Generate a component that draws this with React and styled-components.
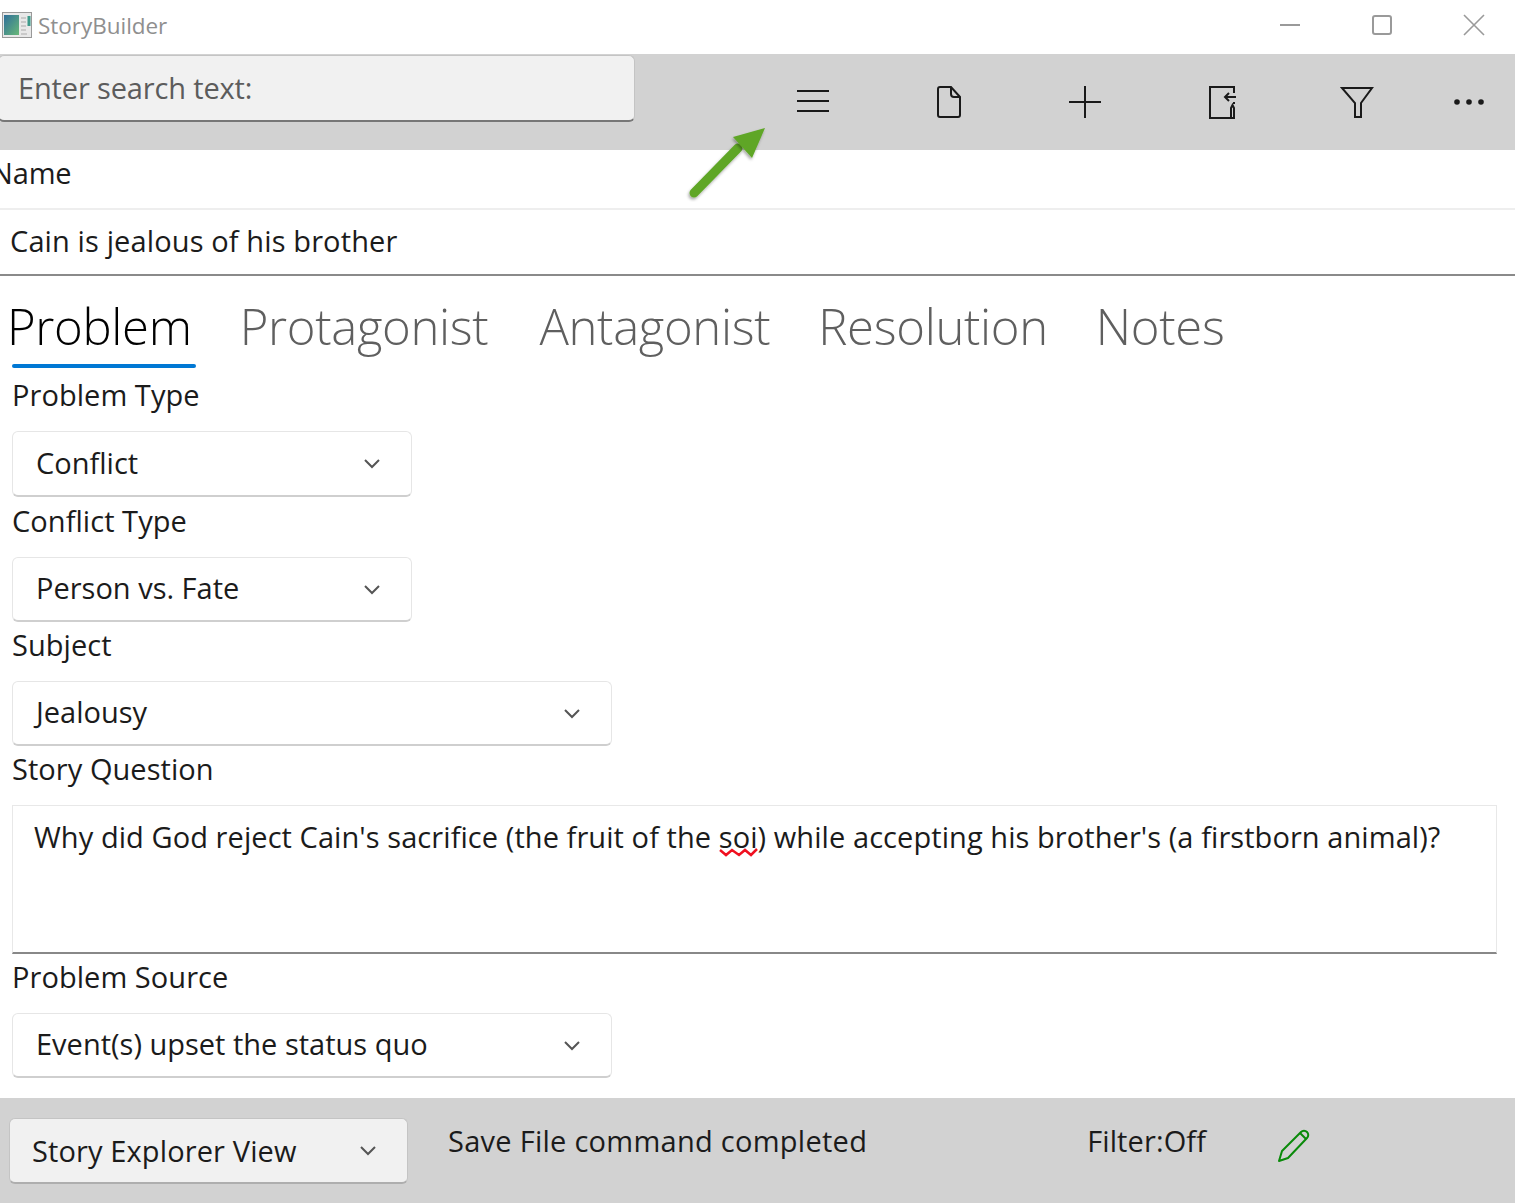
import React from "react";
import styled, { createGlobalStyle } from "styled-components";

const GlobalStyle = createGlobalStyle`
  html, body {
    margin: 0;
    padding: 0;
    background: #fff;
    overflow: hidden;
  }
  body {
    font-family: "Open Sans", "Noto Sans", sans-serif;
    color: #1b1b1b;
  }
`;

const Window = styled.div`
  position: relative;
  width: 1515px;
  height: 1203px;
  display: flex;
  flex-direction: column;
  overflow: hidden;
`;

const TitleBar = styled.div`
  height: 54px;
  box-sizing: border-box;
  padding: 0 0 4px 2px;
  display: flex;
  align-items: center;
  flex-shrink: 0;
`;

const AppTitle = styled.span`
  margin-left: 6px;
  font-size: 22.5px;
  letter-spacing: -0.03px;
  color: #8f8f8f;
`;

const WindowButtons = styled.div`
  margin-left: auto;
  display: flex;
  align-items: center;
  gap: 70px;
  padding-right: 30px;
  color: #9a9a9a;
`;

const Toolbar = styled.div`
  height: 96px;
  background: #d2d2d2;
  display: flex;
  align-items: flex-start;
  flex-shrink: 0;
`;

const SearchBox = styled.div`
  width: 637px;
  height: 67px;
  margin: 1px 0 0 -2px;
  box-sizing: border-box;
  padding: 0 0 2px 19px;
  display: flex;
  align-items: center;
  background: #f1f1f1;
  border: 1px solid #c4c4c4;
  border-bottom: 2px solid #777;
  border-radius: 6px;
  font-size: 29px;
  letter-spacing: -0.15px;
  color: #5c5c5c;
`;

const ToolIcons = styled.div`
  margin-left: 160px;
  padding-top: 26px;
  display: flex;
  align-items: center;
  gap: 100px;
  color: #1a1a1a;
`;

const ToolIcon = styled.svg`
  width: 36px;
  height: 42px;
  display: block;
  margin-left: ${(p) => p.$shift || 0}px;
`;

const NameRow = styled.div`
  height: 58px;
  box-sizing: border-box;
  padding: 2px 0 0 0;
  margin-left: -9px;
  font-size: 29px;
  letter-spacing: -0.15px;
  line-height: 42px;
  flex-shrink: 0;
`;

const NameInput = styled.div`
  height: 68px;
  box-sizing: border-box;
  padding: 10px 0 0 10px;
  border-top: 2px solid #eeeeee;
  border-bottom: 2px solid #8a8a8a;
  font-size: 29px;
  letter-spacing: 0.12px;
  line-height: 42px;
  flex-shrink: 0;
`;

const Tabs = styled.div`
  height: 92px;
  box-sizing: border-box;
  display: flex;
  gap: 48px;
  padding-left: 7px;
  flex-shrink: 0;
`;

const Tab = styled.div`
  position: relative;
  height: 92px;
  margin-left: ${(p) => p.$shift || 0}px;
  font-size: 49px;
  font-weight: 300;
  letter-spacing: -0.32px;
  line-height: 100px;
  color: ${(p) => (p.$active ? "#000" : "#5f5f5f")};
`;

const TabMark = styled.div`
  position: absolute;
  left: 5px;
  right: -4px;
  bottom: 0;
  height: 4px;
  border-radius: 2px;
  background: #0078d4;
`;

const Form = styled.div`
  padding-left: 12px;
  display: flex;
  flex-direction: column;
`;

const FieldLabel = styled.div`
  height: ${(p) => p.$h}px;
  box-sizing: border-box;
  padding-top: ${(p) => p.$top}px;
  font-size: 29px;
  letter-spacing: 0.05px;
  line-height: 44px;
`;

const Select = styled.div`
  width: ${(p) => p.$w}px;
  height: ${(p) => p.$h}px;
  box-sizing: border-box;
  padding: 0 30px ${(p) => (p.$filled ? 0 : 3)}px ${(p) => (p.$filled ? 22 : 23)}px;
  display: flex;
  align-items: center;
  justify-content: space-between;
  background: ${(p) => (p.$filled ? "#f1f1f1" : "#fff")};
  border: 1px solid ${(p) => (p.$filled ? "#c4c4c4" : "#e6e6e6")};
  border-bottom: 2px solid ${(p) => (p.$filled ? "#aeaeae" : "#cfcfcf")};
  border-radius: 6px;
  font-size: 29px;
  letter-spacing: ${(p) => (p.$filled ? 0.12 : 0)}px;

  svg {
    margin-top: ${(p) => (p.$filled ? 0 : 4)}px;
  }
`;

const Question = styled.div`
  width: 1485px;
  height: 149px;
  box-sizing: border-box;
  padding: 9px 0 0 21px;
  border: 1px solid #e8e8e8;
  border-bottom: 2px solid #888;
  font-size: 29px;
  letter-spacing: 0.07px;
  line-height: 44px;
  white-space: nowrap;
`;

const Misspelled = styled.span`
  position: relative;
`;

const SquiggleMark = styled.svg`
  position: absolute;
  left: 0;
  bottom: -2px;
  width: 40px;
  height: 11px;
`;

const StatusBar = styled.div`
  margin-top: auto;
  height: 105px;
  background: #d2d2d2;
  display: flex;
  align-items: flex-start;
  padding: 20px 0 0 9px;
  box-sizing: border-box;
  flex-shrink: 0;
`;

const StatusText = styled.div`
  margin: 1px 0 0 ${(p) => p.$gap}px;
  font-size: 29px;
  letter-spacing: ${(p) => p.$spacing}px;
  line-height: 44px;
`;

const PencilSlot = styled.div`
  margin: 11px 0 0 71px;
`;

const ArrowOverlay = styled.svg`
  position: absolute;
  left: 680px;
  top: 120px;
  width: 95px;
  height: 85px;
  pointer-events: none;
`;

function Chevron() {
  return (
    <svg width="18" height="12" viewBox="0 0 18 12" fill="none" stroke="#555" strokeWidth="2">
      <path d="M2 2l7 7 7-7" />
    </svg>
  );
}

export default function App() {
  return (
    <Window>
      <GlobalStyle />
      <TitleBar>
        <svg width="30" height="26" viewBox="0 0 30 26">
          <rect x="0.5" y="0.5" width="29" height="25" fill="#e8e8e8" stroke="#999" />
          <defs>
            <linearGradient id="pane" x1="0" y1="0" x2="1" y2="1">
              <stop offset="0" stopColor="#2f6f9a" />
              <stop offset="1" stopColor="#68b878" />
            </linearGradient>
          </defs>
          <rect x="2" y="3" width="15" height="20" fill="url(#pane)" />
          <path d="M19 6h5M19 10h5M19 14h5M19 18h5M19 22h6" stroke="#aaa" strokeWidth="1.2" />
          <rect x="25.5" y="4" width="3" height="10" fill="#3d9a8a" />
        </svg>
        <AppTitle>StoryBuilder</AppTitle>
        <WindowButtons>
          <svg width="22" height="22" viewBox="0 0 22 22" stroke="currentColor" strokeWidth="2" fill="none">
            <path d="M1 11h20" />
          </svg>
          <svg width="22" height="22" viewBox="0 0 22 22" stroke="currentColor" strokeWidth="2" fill="none">
            <rect x="2" y="2" width="18" height="18" rx="2" />
          </svg>
          <svg width="22" height="22" viewBox="0 0 22 22" stroke="currentColor" strokeWidth="1.6" fill="none">
            <path d="M1 1l20 20M21 1L1 21" />
          </svg>
        </WindowButtons>
      </TitleBar>

      <Toolbar>
        <SearchBox>Enter search text:</SearchBox>
        <ToolIcons>
          <ToolIcon viewBox="0 0 36 42" fill="none" stroke="currentColor" strokeWidth="2">
            <path d="M2 11h32M2 21h32M2 31h32" />
          </ToolIcon>
          <ToolIcon viewBox="0 0 36 42" fill="none" stroke="currentColor" strokeWidth="2">
            <path d="M9 7h11l9 10v18a2 2 0 0 1-2 2H9a2 2 0 0 1-2-2V9a2 2 0 0 1 2-2zM20 7v7a3 3 0 0 0 3 3h6" />
          </ToolIcon>
          <ToolIcon viewBox="0 0 36 42" fill="none" stroke="currentColor" strokeWidth="2">
            <path d="M18 6v32M2 22h32" />
          </ToolIcon>
          <ToolIcon viewBox="0 0 36 42" fill="none" stroke="currentColor" strokeWidth="2">
            <path d="M31 13V7H7v31h24M31 24v-2" />
            <path d="M33 17H23M26 13l-4 4 4 4" />
            <path d="M28 38V28l1.500-3 1.500 3v10z" />
          </ToolIcon>
          <ToolIcon viewBox="0 0 36 42" fill="none" stroke="currentColor" strokeWidth="2">
            <path d="M3 8h30L22 23v14h-6V23z" />
          </ToolIcon>
          <ToolIcon $shift={-24} viewBox="0 0 36 42" fill="currentColor">
            <circle cx="6" cy="22" r="2.800" />
            <circle cx="18" cy="22" r="2.800" />
            <circle cx="30" cy="22" r="2.800" />
          </ToolIcon>
        </ToolIcons>
      </Toolbar>

      <NameRow>Name</NameRow>
      <NameInput>Cain is jealous of his brother</NameInput>

      <Tabs>
        <Tab $active>
          Problem
          <TabMark />
        </Tab>
        <Tab>Protagonist</Tab>
        <Tab $shift={3}>Antagonist</Tab>
        <Tab>Resolution</Tab>
        <Tab>Notes</Tab>
      </Tabs>

      <Form>
        <FieldLabel $h={63} $top={5}>Problem Type</FieldLabel>
        <Select $w={400} $h={66}>
          Conflict
          <Chevron />
        </Select>
        <FieldLabel $h={60} $top={2}>Conflict Type</FieldLabel>
        <Select $w={400} $h={65}>
          Person vs. Fate
          <Chevron />
        </Select>
        <FieldLabel $h={59} $top={1}>Subject</FieldLabel>
        <Select $w={600} $h={65}>
          Jealousy
          <Chevron />
        </Select>
        <FieldLabel $h={59} $top={1}>Story Question</FieldLabel>
        <Question>
          Why did God reject Cain's sacrifice (the fruit of the{" "}
          <Misspelled>
            soi
            <SquiggleMark viewBox="0 0 40 11" fill="none" stroke="#f01020" strokeWidth="2.500">
              <path d="M1 3l6 5 6-5 7 5 6-5 6 5 6-6" />
            </SquiggleMark>
          </Misspelled>
          ) while accepting his brother's (a firstborn animal)?
        </Question>
        <FieldLabel $h={59} $top={1}>Problem Source</FieldLabel>
        <Select $w={600} $h={65}>
          Event(s) upset the status quo
          <Chevron />
        </Select>
      </Form>

      <StatusBar>
        <Select $w={399} $h={66} $filled>
          Story Explorer View
          <Chevron />
        </Select>
        <StatusText $gap={40} $spacing={0.27}>Save File command completed</StatusText>
        <StatusText $gap={220} $spacing={0.12}>Filter:Off</StatusText>
        <PencilSlot>
          <svg width="34" height="34" viewBox="0 0 34 34" fill="none" stroke="#0a8a0a" strokeWidth="2" strokeLinejoin="round">
            <path d="M2 32l3-10L24 3a3.500 3.500 0 0 1 6 6L11 29z" />
            <path d="M23 4l6 6" />
          </svg>
        </PencilSlot>
      </StatusBar>

      <ArrowOverlay viewBox="0 0 95 85">
        <defs>
          <filter id="arrowShadow" x="-20%" y="-20%" width="140%" height="140%">
            <feDropShadow dx="-1" dy="2" stdDeviation="1.500" floodColor="#000" floodOpacity="0.35" />
          </filter>
        </defs>
        <path
          d="M14 73L58 28"
          stroke="#5ea626"
          strokeWidth="9"
          strokeLinecap="round"
          filter="url(#arrowShadow)"
        />
        <path d="M85 8L53 17 72 38z" fill="#5ea626" filter="url(#arrowShadow)" />
      </ArrowOverlay>
    </Window>
  );
}
